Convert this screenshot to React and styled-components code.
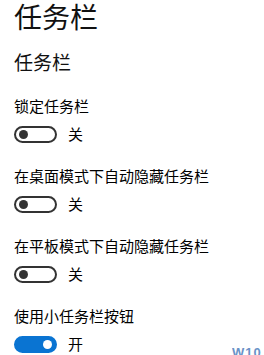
import React from 'react';
import styled, { createGlobalStyle } from 'styled-components';

const GlobalStyle = createGlobalStyle`
  html, body {
    margin: 0;
    padding: 0;
    background: #fff;
    overflow: hidden;
  }
  body {
    font-family: "Noto Sans CJK SC", "Noto Sans", sans-serif;
    color: #000;
  }
`;

const Page = styled.div`
  position: relative;
  width: 264px;
  height: 355px;
  padding: 0 14px;
  box-sizing: border-box;
  display: flex;
  flex-direction: column;
`;

const Title = styled.div`
  font-size: 28px;
  line-height: 32px;
  font-weight: 400;
  color: #111;
`;

const Subtitle = styled.div`
  margin-top: 18px;
  font-size: 19px;
  line-height: 24px;
  color: #111;
`;

const List = styled.div`
  margin-top: 22px;
  display: flex;
  flex-direction: column;
  gap: 23px;
`;

const Setting = styled.div`
  display: flex;
  flex-direction: column;
  gap: 8px;
`;

const Label = styled.div`
  font-size: 15px;
  line-height: 20px;
  white-space: nowrap;
`;

const Row = styled.div`
  display: flex;
  align-items: center;
  gap: 11px;
  height: 18px;
  margin-top: 1px;
`;

const Track = styled.div`
  width: 43px;
  height: 17px;
  box-sizing: border-box;
  border-radius: 9px;
  border: 2px solid ${p => (p.$on ? '#0a74d2' : '#333')};
  background: ${p => (p.$on ? '#0a74d2' : '#fff')};
  display: flex;
  align-items: center;
  justify-content: ${p => (p.$on ? 'flex-end' : 'flex-start')};
  padding: 0 3px;
`;

const Knob = styled.div`
  width: 9px;
  height: 9px;
  border-radius: 50%;
  background: ${p => (p.$on ? '#fff' : '#333')};
`;

const State = styled.span`
  font-size: 15px;
  line-height: 18px;
`;

const Watermark = styled.span`
  position: absolute;
  left: 232px;
  top: 346px;
  font-family: "Liberation Sans", Arial, sans-serif;
  font-weight: bold;
  font-size: 13px;
  line-height: 14px;
  color: #2a64b0;
  opacity: 0.7;
  letter-spacing: 1px;
`;

const settings = [
  { label: '锁定任务栏', on: false },
  { label: '在桌面模式下自动隐藏任务栏', on: false },
  { label: '在平板模式下自动隐藏任务栏', on: false },
  { label: '使用小任务栏按钮', on: true },
];

function Toggle({ on }) {
  return (
    <Row>
      <Track $on={on}>
        <Knob $on={on} />
      </Track>
      <State>{on ? '开' : '关'}</State>
    </Row>
  );
}

export default function App() {
  return (
    <>
      <GlobalStyle />
      <Page>
        <Title>任务栏</Title>
        <Subtitle>任务栏</Subtitle>
        <List>
          {settings.map(s => (
            <Setting key={s.label}>
              <Label>{s.label}</Label>
              <Toggle on={s.on} />
            </Setting>
          ))}
        </List>
        <Watermark>W10</Watermark>
      </Page>
    </>
  );
}
